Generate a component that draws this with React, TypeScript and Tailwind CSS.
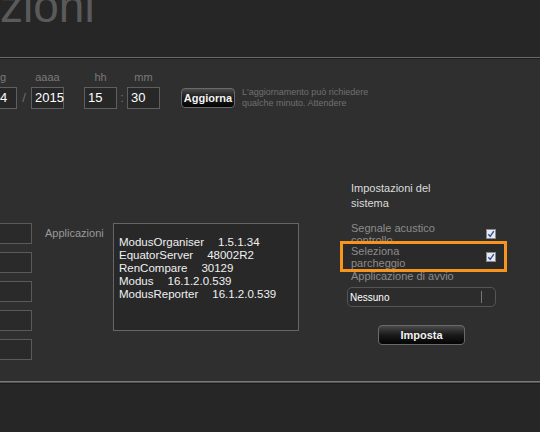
import React from "react";

const CheckBox = () => (
  <div className="w-[10px] h-[10px] border border-[#8a8a8a] bg-[#e9e9ee] flex items-center justify-center shrink-0">
    <svg width="8" height="8" viewBox="0 0 8 8">
      <path d="M1.3 4.2 L3.2 6.3 L6.8 1.2" fill="none" stroke="#2b4fa8" strokeWidth="1.4" />
    </svg>
  </div>
);

const DateField = ({ label, value }: { label: string; value: string }) => (
  <div className="flex flex-col items-center w-[33px]">
    <span className="text-[11px] leading-[14px] text-[#7a7a7a] mb-[3px]">{label}</span>
    <div className="w-full h-[22px] border border-[#5f5f5f] bg-[#272727] text-white text-[13px] leading-[20px] pl-[3px]">
      {value}
    </div>
  </div>
);

const apps = [
  ["ModusOrganiser", "1.5.1.34"],
  ["EquatorServer", "48002R2"],
  ["RenCompare", "30129"],
  ["Modus", "16.1.2.0.539"],
  ["ModusReporter", "16.1.2.0.539"],
];

const App = () => {
  return (
    <div
      className="w-[540px] h-[432px] overflow-hidden bg-[#262626]"
      style={{ fontFamily: '"Liberation Sans", Arial, sans-serif' }}
    >
      {/* header */}
      <div className="h-[57px] overflow-hidden">
        <div className="text-[46px] leading-[46px] text-[#5a5a5a] mt-[-17px] whitespace-nowrap">zioni</div>
      </div>
      <div className="h-px bg-[#6a6a6a]" />
      <div className="h-px bg-[#1c1c1c]" />

      {/* main */}
      <div className="h-[322px] bg-[#2f2f2f] pt-[11px] overflow-hidden">
        {/* date row */}
        <div className="flex items-end">
          <div className="flex flex-col w-[17px]">
            <span className="text-[11px] leading-[14px] text-[#7a7a7a] mb-[3px]">g</span>
            <div className="h-[22px] border border-l-0 border-[#5f5f5f] bg-[#272727] text-white text-[13px] leading-[20px]">
              4
            </div>
          </div>
          <span className="w-[14px] text-center text-[#6e6e6e] text-[13px] leading-[22px]">/</span>
          <DateField label="aaaa" value="2015" />
          <div className="w-[20px]" />
          <DateField label="hh" value="15" />
          <span className="w-[10px] text-center text-[#6e6e6e] text-[13px] leading-[22px]">:</span>
          <DateField label="mm" value="30" />
          <button className="ml-[21px] mb-px w-[54px] h-[20px] rounded-[4px] border border-[#6a6a6a] bg-linear-to-b from-[#4a4a4a] via-[#1a1a1a] to-[#050505] text-[#f2f2f2] text-[11px] font-bold leading-[18px]">
            Aggiorna
          </button>
          <div className="ml-[7px] text-[9px] leading-[11px] text-[#707070]">
            <div>L'aggiornamento può richiedere</div>
            <div>qualche minuto. Attendere</div>
          </div>
        </div>

        {/* lower section */}
        <div className="flex items-start mt-[72px]">
          <div className="flex flex-col gap-[8px] w-[32px] mt-[42px]">
            {[0, 1, 2, 3, 4].map((i) => (
              <div key={i} className="h-[21px] border border-l-0 border-[#5a5a5a] bg-[#2a2a2a]" />
            ))}
          </div>
          <div className="ml-[13px] mt-[45px] w-[68px] text-[11px] leading-[14px] text-[#9a9a9a]">Applicazioni</div>
          <div className="mt-[42px] w-[186px] h-[108px] border border-[#666] bg-[#282828] pt-[12px] pl-[5px]">
            {apps.map(([name, ver]) => (
              <div key={name} className="text-[#f0f0f0] text-[11.5px] leading-[13px] whitespace-nowrap">
                {name}
                <span className="ml-[14px]">{ver}</span>
              </div>
            ))}
          </div>

          {/* settings */}
          <div className="ml-[41px] w-[167px] flex flex-col">
            <div className="px-[11px] text-[11px] leading-[15px] text-[#dcdcdc]">
              <div>Impostazioni del</div>
              <div>sistema</div>
            </div>
            <div className="mt-[11px] px-[11px] flex items-center justify-between text-[11px] leading-[12px] text-[#8c8c8c]">
              <div>
                <div>Segnale acustico</div>
                <div>controllo</div>
              </div>
              <CheckBox />
            </div>
            <div className="relative z-10 -mt-[5px] h-[31px] border-[3px] border-[#f7941d] bg-[#2a2a2a] px-[8px] flex items-center justify-between text-[11px] leading-[12px] text-[#8c8c8c]">
              <div>
                <div>Seleziona</div>
                <div>parcheggio</div>
              </div>
              <CheckBox />
            </div>
            <div className="-mt-[2px] px-[11px] text-[11px] leading-[12px] text-[#8c8c8c] whitespace-nowrap">
              Applicazione di avvio
            </div>
            <div className="mt-[5px] ml-[7px] w-[149px] h-[20px] rounded-[5px] border border-[#555] bg-[#2c2c2c] flex items-center justify-between pl-[2px] pr-[13px]">
              <span className="text-white text-[10px]">Nessuno</span>
              <span className="w-px h-[12px] bg-[#777]" />
            </div>
            <button className="mt-[18px] ml-[38px] w-[87px] h-[20px] rounded-[4px] border border-[#6a6a6a] bg-linear-to-b from-[#4a4a4a] via-[#1a1a1a] to-[#050505] text-[#f2f2f2] text-[11px] font-bold leading-[18px]">
              Imposta
            </button>
          </div>
        </div>
      </div>

      <div className="h-px bg-[#777]" />
      <div className="h-px bg-[#555]" />
      <div className="h-px bg-[#1a1a1a]" />
      <div className="h-[48px] bg-[#262626]" />
    </div>
  );
};

export default App;
